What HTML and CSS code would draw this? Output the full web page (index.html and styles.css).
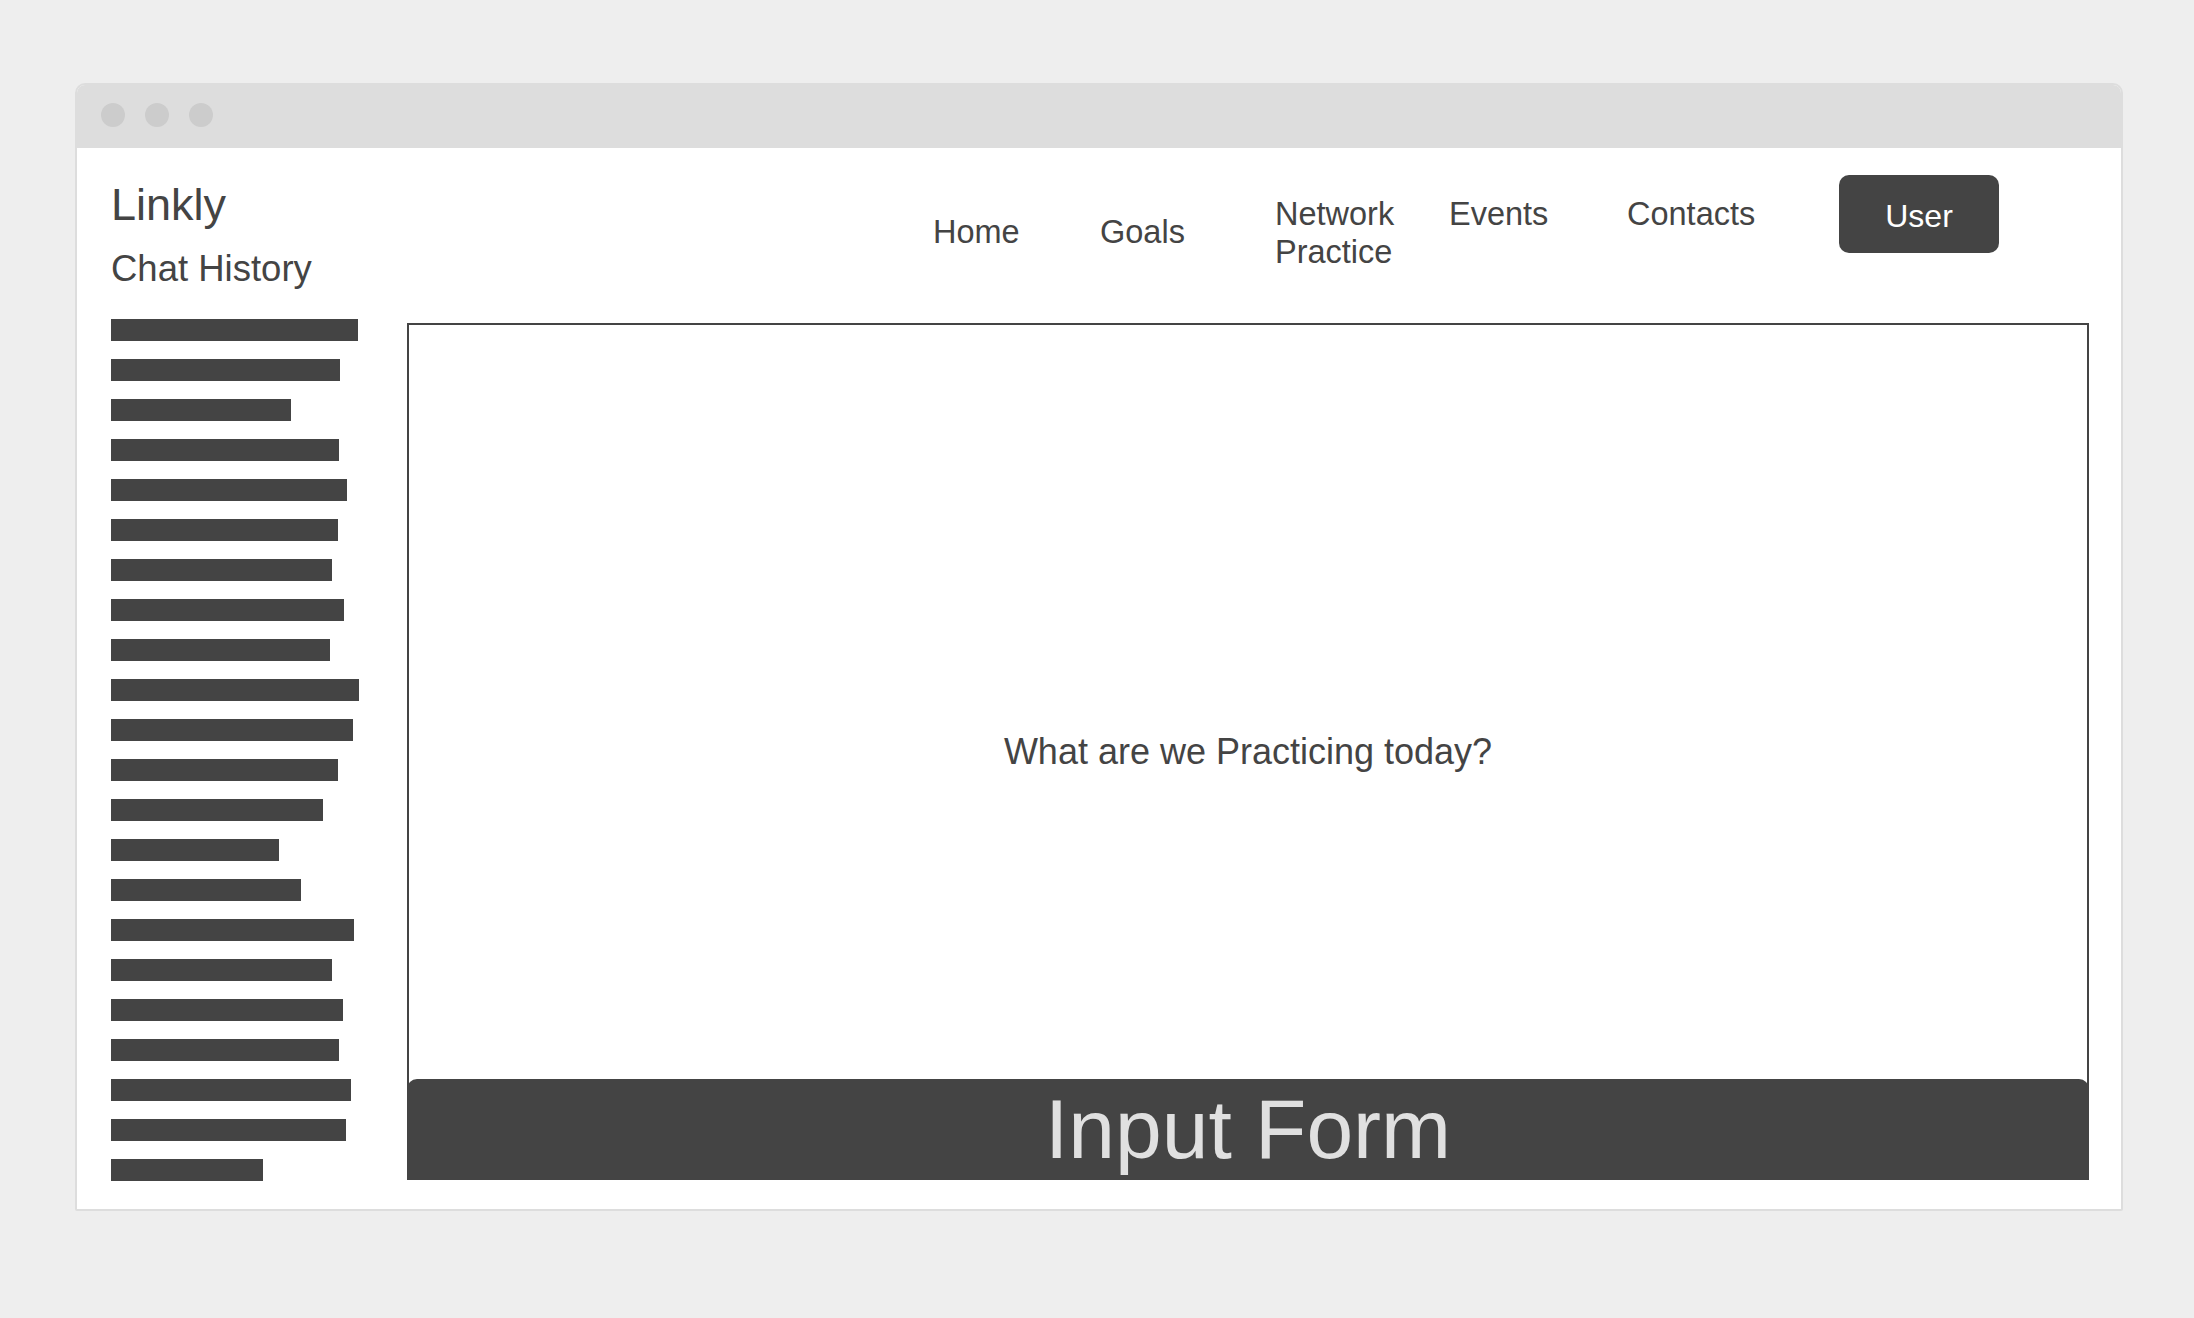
FILE: index.html
```html
<!DOCTYPE html>
<html lang="en">
<head>
<meta charset="utf-8">
<title>Linkly</title>
<link rel="stylesheet" href="styles.css">
</head>
<body>
<div class="window">
  <div class="titlebar">
    <span class="dot"></span><span class="dot"></span><span class="dot"></span>
  </div>
  <div class="content">
    <aside class="sidebar">
      <div class="logo">Linkly</div>
      <div class="history-title">Chat History</div>
      <ul class="history">
        <li style="width:247px"></li>
        <li style="width:229px"></li>
        <li style="width:180px"></li>
        <li style="width:228px"></li>
        <li style="width:236px"></li>
        <li style="width:227px"></li>
        <li style="width:221px"></li>
        <li style="width:233px"></li>
        <li style="width:219px"></li>
        <li style="width:248px"></li>
        <li style="width:242px"></li>
        <li style="width:227px"></li>
        <li style="width:212px"></li>
        <li style="width:168px"></li>
        <li style="width:190px"></li>
        <li style="width:243px"></li>
        <li style="width:221px"></li>
        <li style="width:232px"></li>
        <li style="width:228px"></li>
        <li style="width:240px"></li>
        <li style="width:235px"></li>
        <li style="width:152px"></li>
      </ul>
    </aside>
    <main class="main">
      <nav class="nav">
        <a class="nav-item nav-center w-home">Home</a>
        <a class="nav-item nav-center w-goals">Goals</a>
        <a class="nav-item w-network">Network Practice</a>
        <a class="nav-item w-events">Events</a>
        <a class="nav-item w-contacts">Contacts</a>
        <button class="user-btn">User</button>
      </nav>
      <section class="panel">
        <p class="prompt">What are we Practicing today?</p>
        <div class="input-form">Input Form</div>
      </section>
    </main>
  </div>
</div>
</body>
</html>
```

FILE: styles.css
```css
* { box-sizing: border-box; }

html, body {
  margin: 0;
  padding: 0;
  background: #eeeeee;
  font-family: "Liberation Sans", Arial, sans-serif;
  color: #444444;
}

.window {
  margin: 83px 0 0 75px;
  width: 2048px;
  height: 1128px;
  background: #ffffff;
  border: 2px solid #dddddd;
  border-radius: 10px 10px 2px 2px;
  display: flex;
  flex-direction: column;
}

.titlebar {
  height: 64px;
  background: #dddddd;
  display: flex;
  gap: 20px;
  padding: 18px 0 0 24px;
  border-radius: 8px 8px 0 0;
}

.dot {
  width: 24px;
  height: 24px;
  border-radius: 50%;
  background: #cccccc;
}

.content {
  flex: 1;
  display: flex;
  gap: 36px;
  padding: 27px 32px 28px 34px;
}

.sidebar {
  width: 260px;
  display: flex;
  flex-direction: column;
}

.logo {
  margin-top: 5px;
  font-size: 45px;
  line-height: 50px;
}

.history-title {
  margin-top: 18px;
  font-size: 36.5px;
  line-height: 42px;
}

.history {
  list-style: none;
  margin: 29px 0 0 0;
  padding: 0;
  display: flex;
  flex-direction: column;
  gap: 18px;
}

.history li {
  height: 22px;
  background: #444444;
}

.main {
  flex: 1;
  display: flex;
  flex-direction: column;
}

.nav {
  display: flex;
  align-items: flex-start;
  justify-content: flex-end;
  padding-right: 90px;
  height: 96px;
}

.nav-item {
  font-size: 32.5px;
  line-height: 38px;
  margin-top: 20px;
  color: #444444;
}

.nav-center { margin-top: 38px; }

.w-home { width: 167px; }
.w-goals { width: 175px; }
.w-network { width: 174px; padding-right: 40px; }
.w-events { width: 178px; }
.w-contacts { width: 212px; }

.user-btn {
  width: 160px;
  height: 78px;
  border: 0;
  border-radius: 10px;
  background: #444444;
  color: #ffffff;
  font-family: "Liberation Sans", Arial, sans-serif;
  font-size: 32px;
  padding: 4px 0 0 0;
}

.panel {
  position: relative;
  margin-top: 52px;
  height: 857px;
  border: 2px solid #444444;
  display: flex;
  align-items: center;
  justify-content: center;
}

.prompt {
  margin: 0;
  font-size: 36px;
  line-height: 42px;
  color: #444444;
}

.input-form {
  position: absolute;
  left: -2px;
  right: -2px;
  bottom: -2px;
  height: 101px;
  background: #444444;
  border-radius: 10px 10px 3px 3px;
  color: #e0e0e0;
  font-size: 84px;
  line-height: 101px;
  text-align: center;
}
```
